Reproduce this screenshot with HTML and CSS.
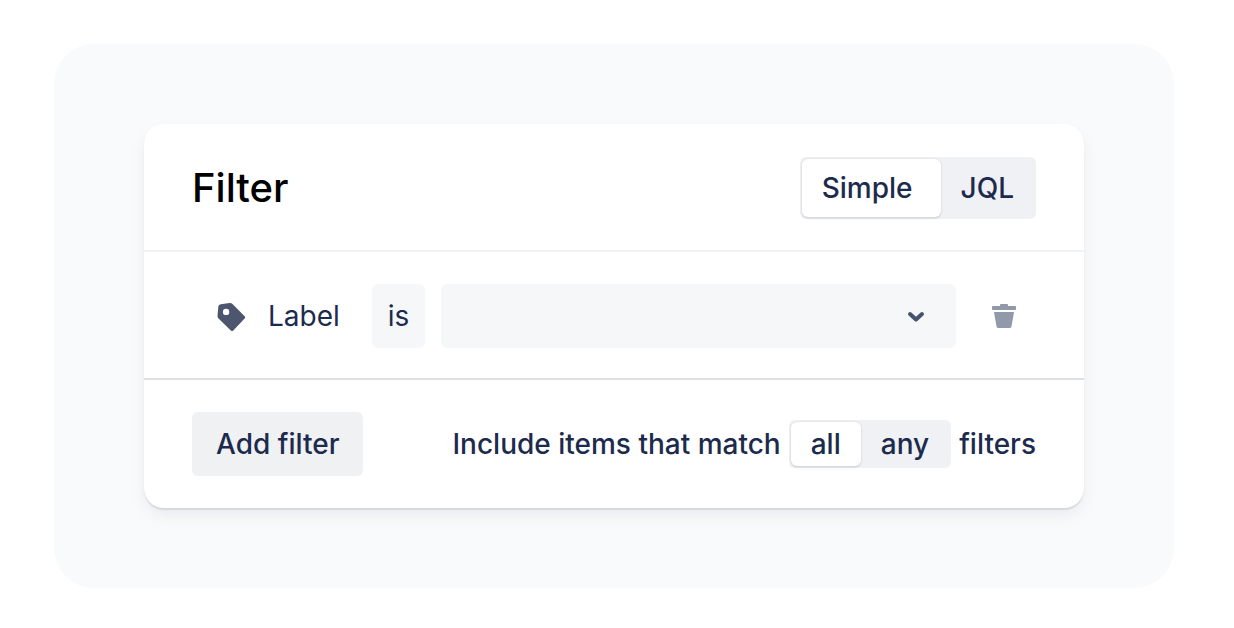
FILE: index.html
```html
<!DOCTYPE html>
<html lang="en">
<head>
  <meta charset="UTF-8">
  <meta name="viewport" content="width=device-width, initial-scale=1.0">
  <title>Filter</title>
  <link rel="stylesheet" href="styles.css">
</head>
<body>
  <main class="panel">
    <form class="card">
      <header class="card-header">
        <h1 class="title">Filter</h1>
        <div class="segment" role="radiogroup" aria-label="Filter mode">
          <label class="option option-wide"><input type="radio" name="mode" value="simple" checked><span>Simple</span></label>
          <label class="option"><input type="radio" name="mode" value="jql"><span>JQL</span></label>
        </div>
      </header>

      <div class="filter-row">
        <svg class="tag-icon" viewBox="0 0 30 30" aria-hidden="true">
          <path fill-rule="evenodd" d="M4.700 3.300 13.500 2q1.800-.2 3 1L28.600 15.200q1.200 1.200 0 2.400L17.300 29.500q-1.300 1.200-2.500 0L2.500 17.600q-1-1-1-2.300L2.300 5.600q.2-2 2.400-2.300zM10.100 7.700a3.200 3.200 0 1 0 0 6.400 3.200 3.200 0 0 0 0-6.400z"/>
        </svg>
        <label class="field-name" for="label-value">Label</label>
        <button type="button" class="operator">is</button>
        <div class="select-wrap">
          <select class="select" id="label-value">
            <option value=""></option>
          </select>
          <svg class="chevron" viewBox="0 0 16 10" aria-hidden="true">
            <path d="M2 2l6 5.500L14 2"/>
          </svg>
        </div>
        <button type="button" class="delete" aria-label="Remove filter">
          <svg viewBox="0 0 24 24" aria-hidden="true">
            <path d="M1 2h7V1q0-1 1-1h6q1 0 1 1v1h7q1 0 1 1v2q0 1-1 1H1Q0 6 0 5V3q0-1 1-1zM2 8h20l-2.500 14.500Q19.200 24 17.600 24H6.400q-1.600 0-1.900-1.500z"/>
          </svg>
        </button>
      </div>

      <footer class="card-footer">
        <button type="button" class="add-button">Add filter</button>
        <div class="match">
          <span>Include items that match</span>
          <div class="segment segment-small" role="radiogroup" aria-label="Match">
            <label class="option"><input type="radio" name="match" value="all" checked><span>all</span></label>
            <label class="option"><input type="radio" name="match" value="any"><span>any</span></label>
          </div>
          <span>filters</span>
        </div>
      </footer>
    </form>
  </main>
</body>
</html>
```

FILE: styles.css
```css
* {
  box-sizing: border-box;
}
body {
  margin: 0;
  padding: 44px 60px 40px 54px;
  background: #fff;
  color: #1c2b4d;
  font-family: Inter, "Liberation Sans", sans-serif;
  font-size: 28px;
  line-height: 40px;
}
button,
select {
  font: inherit;
  color: inherit;
  border: 0;
  cursor: pointer;
}
.panel {
  padding: 80px 90px;
  background: #f9fafc;
  border-radius: 40px;
}
.card {
  background: #fff;
  border-radius: 20px;
  box-shadow: 0 2px 1px rgba(20, 25, 35, 0.1), 0 8px 16px rgba(20, 25, 35, 0.06);
}
.card-header,
.card-footer {
  display: flex;
  align-items: center;
  justify-content: space-between;
  padding: 32px 48px;
}
.card-header {
  padding: 33px 48px 31px;
  border-bottom: 2px solid #f0f1f3;
}
.title {
  margin: 0;
  color: #000;
  font-size: 40px;
  font-weight: 500;
  line-height: 62px;
}
.segment {
  display: flex;
  padding: 2px;
  background: #f0f1f4;
  border-radius: 6px;
  font-weight: 500;
}
.option {
  position: relative;
  cursor: pointer;
}
.option input {
  position: absolute;
  opacity: 0;
}
.option span {
  display: block;
  padding: 0 20px;
  border-radius: 6px;
  line-height: 58px;
}
.option-wide span {
  padding-right: 28px;
}
.segment-small .option span {
  line-height: 44px;
}
.option input:checked + span {
  background: #fff;
  box-shadow: 0 0 2px rgba(9, 30, 66, 0.16), 0 2px 2px rgba(9, 30, 66, 0.08);
}
.filter-row {
  display: flex;
  align-items: center;
  padding: 32px 68px 30px 72px;
  border-bottom: 2px solid #dfe0e6;
}
.tag-icon {
  width: 30px;
  height: 30px;
  margin-right: 22px;
  fill: #4c566f;
}
.field-name {
  margin-right: 32px;
}
.operator {
  height: 64px;
  margin-right: 16px;
  padding: 0 16px;
  background: #f6f7f9;
  border-radius: 6px;
}
.select-wrap {
  position: relative;
  flex: 1;
}
.select {
  display: block;
  width: 100%;
  height: 64px;
  padding: 0 64px 0 16px;
  appearance: none;
  background: #f6f7f9;
  border-radius: 6px;
}
.chevron {
  position: absolute;
  top: 28px;
  right: 32px;
  width: 16px;
  height: 10px;
  overflow: visible;
  fill: none;
  stroke: #44546f;
  stroke-width: 4;
  stroke-linecap: round;
  stroke-linejoin: round;
  pointer-events: none;
}
.delete {
  margin-left: 36px;
  padding: 0;
  background: none;
}
.delete svg {
  display: block;
  width: 24px;
  height: 24px;
  fill: #9199ab;
}
.add-button {
  height: 64px;
  padding: 0 24px;
  background: #f0f1f3;
  border-radius: 6px;
  font-weight: 500;
}
.match {
  display: flex;
  align-items: center;
  gap: 8px;
  font-weight: 500;
}
```
